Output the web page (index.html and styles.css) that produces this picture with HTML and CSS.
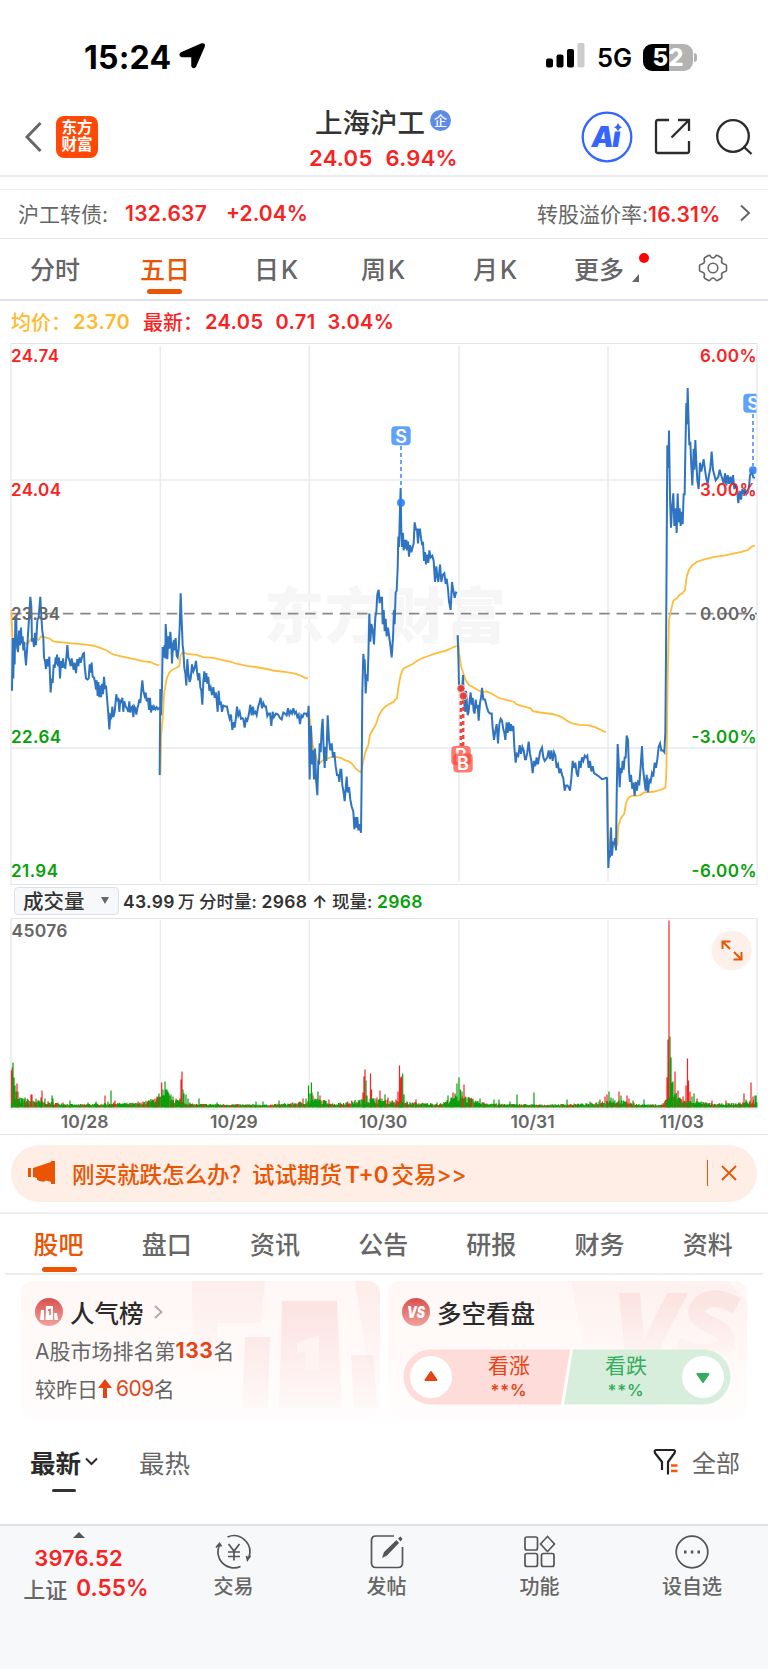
FILE: index.html
```html
<!DOCTYPE html>
<html lang="zh-CN">
<head>
<meta charset="utf-8">
<title>上海沪工</title>
<link rel="stylesheet" href="styles.css">
</head>
<body>
<div class="status">
  <span class="time">15:24</span>
  <svg class="loc" width="27" height="27" viewBox="0 0 27 27"><path d="M2.5 11.500 23 2.500Q25.500 2 24.500 4.500L16 24Q14.500 26 13.500 24V14H3Q.5 13 2.500 11.500Z" stroke="#000" stroke-width="2.500" stroke-linejoin="round"/></svg>
  <svg class="signal" width="39" height="26" viewBox="0 0 39 26"><rect x="0" y="15.500" width="7" height="9" rx="2"/><rect x="10.500" y="11.500" width="7" height="13" rx="2"/><rect x="21" y="6" width="7" height="18.500" rx="2"/><rect x="31.500" y="0" width="7" height="24.500" rx="2" fill="#ccc"/></svg>
  <span class="net">5G</span>
  <span class="battery">52</span><i class="nub"></i>
</div>
<header class="header">
  <svg class="back" width="18" height="32" viewBox="0 0 18 32"><path d="M15.500 2 2 16 15.500 30"/></svg>
  <div class="logo">东方<br>财富</div>
  <div class="title">
    <div class="name">上海沪工<span class="ent">企</span></div>
    <div class="price"><span>24.05</span><span>6.94%</span></div>
  </div>
  <svg class="ai" width="52" height="52" viewBox="0 0 52 52"><circle cx="26" cy="26" r="24.300"/><text x="10.500" y="35.500" textLength="29">Ai</text><rect x="32" y="11" width="11" height="9.500" fill="#fff"/><path d="M37 12Q38 15.200 41 16.200 38 17.200 37 20.200 36 17.200 33 16.200 36 15.200 37 12Z"/></svg>
  <svg class="share" width="37" height="37" viewBox="0 0 37 37"><path d="M15 2H4Q2 2 2 4V33Q2 35 4 35H33Q35 35 35 33V23M24 2H35V13M35 2 17.500 19.500"/></svg>
  <svg class="search" width="38" height="38" viewBox="0 0 38 38"><circle cx="18" cy="18" r="15.800"/><path d="M28.500 28.500 36.500 36"/></svg>
</header>
<div class="gap"></div>
<div class="bond">
  <span class="b1">沪工转债:</span><span class="b2">132.637</span><span class="b3">+2.04%</span>
  <span class="b4">转股溢价率:<b>16.31%</b></span>
  <svg width="12" height="18" viewBox="0 0 12 18"><path d="M2 1.500 10 9 2 16.500"/></svg>
</div>
<nav class="periods">
  <span>分时</span><span class="on">五日</span><span>日<em>K</em></span><span>周<em>K</em></span><span>月<em>K</em></span><span class="more">更多<i></i><u></u></span>
  <svg class="gear" width="30" height="28" viewBox="0 0 30 28"><path d="M10.500 1.500Q12 1 13 3Q15 5 17 3Q18 1 19.500 1.500L23 3.500Q24.500 4.500 23.500 7Q23.500 9.500 26 10Q28.500 10.500 28.500 12V16Q28.500 17.500 26 18Q23.500 18.500 23.500 21Q24.500 23.500 23 24.500L19.500 26.500Q18 27 17 25Q15 23 13 25Q12 27 10.500 26.500L7 24.500Q5.500 23.500 6.500 21Q6.500 18.500 4 18Q1.500 17.500 1.500 16V12Q1.500 10.500 4 10Q6.500 9.500 6.500 7Q5.500 4.500 7 3.500Z"/><circle cx="15" cy="14" r="4.800"/></svg>
</nav>
<div class="quote"><span class="avg">均价：</span><span class="avg n">23.70</span><span class="q3">最新：</span><span class="n">24.05</span><span class="n q5">0.71</span><span class="n q6">3.04%</span></div>

<svg class="chart" width="768" height="543" viewBox="0 343 768 543">
  <g class="frame"><path d="M11 343.500H757V884.500H11Z"/></g>
  <g class="grid"><path d="M160.300 346V881M309.300 346V881M459 346V881M608 346V881M11 480H757M11 748H757"/></g>
  <text class="mark" x="264" y="637.500" textLength="242">东方财富</text>
  <path class="dash" d="M11 613.600H757"/>
  <g class="avgline" transform="translate(0 340) scale(.33333 .35075)"><polyline points="34,770 37,840 40,880 44,885 50,868 58,862 70,862 78,866 84,865 92,853 104,853 115,855 124,845 136,848 148,851 160,859 175,861 195,863 215,865 240,867 265,869 285,873 305,879 322,886 332,893 345,898 360,901 385,906 410,911 430,916 450,918 462,923 470,926 478,927"/><polyline points="481,1240 484,1120 488,1080 492,1010 500,965 508,948 517,940 528,935 538,930 542,898 549,889 560,895 575,896 590,898 610,904 640,906 665,912 690,917 710,923 740,929 770,933 800,938 825,943 860,947 885,951 900,956 915,963 924,965"/></g>
  <g class="avgline" transform="translate(300 340) scale(.33333 .35075)"><polyline points="27,1060 32,1100 38,1155 46,1180 52,1200 58,1207 66,1200 74,1195 85,1192 100,1187 112,1189 125,1192 135,1198 148,1202 158,1210 165,1220 174,1227 183,1233 190,1200 196,1175 205,1155 210,1125 218,1112 228,1095 236,1072 246,1055 256,1045 268,1038 280,1032 291,1020 296,985 302,955 310,937 322,931 338,924 350,915 365,908 385,901 405,894 425,889 440,885 455,878 470,872"/><polyline points="473,842 477,890 483,930 490,950 496,968 506,983 520,990 532,997 545,1003 560,1002 575,1008 595,1020 615,1025 643,1032 648,1038 665,1043 692,1050 698,1058 720,1062 760,1067 785,1075 805,1088 820,1094 840,1097 865,1099 885,1104 900,1110 910,1116 918,1117"/></g>
  <g class="avgline" transform="translate(520 340) scale(.33333 .35075)"><polyline points="262,1247 264,1380 268,1445 280,1445 292,1440 295,1385 302,1365 313,1350 318,1320 325,1305 335,1300 360,1298 372,1290 400,1288 420,1283 436,1277 439,1240 441,1120 443,960 447,800 452,775 460,743 470,737 478,727 487,722 495,713 500,675 507,655 517,642 530,633 550,626 580,619 610,615 640,609 665,604 685,598 695,589 705,586"/></g>
  <g class="priceline" transform="translate(0 340) scale(.33333 .35075)"><polyline points="36,1000 38,850 40,965 42,850 44,925 46,795 49,790 50,860 52,880 54,890 57,828 60,870 63,820 65,865 68,845 70,885 72,860 75,895 78,928 82,870 86,810 91,732 94,760 96,860 99,850 102,875 105,835 108,870 112,800 116,790 121,732 124,790 127,830 130,850 132,905 135,915 138,938 141,910 145,930 148,903 150,960 152,1005 155,965 158,978 161,925 164,935 167,905 169,925 171,897 174,930 177,905 180,965 183,915 186,935 189,908 192,932 196,935 199,905 202,870 205,905 208,912 212,930 215,908 218,925 221,940 224,920 228,950 232,910 235,930 239,905 242,920 245,908 249,895 252,893 254,930 258,965 262,968 266,965 269,925 272,948 275,920 278,960 282,962 285,975 288,997 290,970 293,1015 295,975 298,1018 300,985 303,1018 306,980 309,1010 312,960 315,995 318,985 321,1020 324,1055 328,1110 331,1070 334,1075 337,1045 340,1075 344,1060 349,1010 352,1030 355,1020 358,1060 361,1025 364,1035 367,1020 370,1060 373,1030 377,1045 381,1050 385,1060 388,1030 391,1062 394,1048 397,1045 400,1075 403,1045 406,1050 409,1068 412,1050 415,1040 418,1025 421,1035 424,1000 427,970 430,1000 434,1015 437,1005 440,1030 444,1020 447,1055 450,1020 453,1062 456,1042 459,1055 462,1045 466,1053 470,1047 474,1053 480,1048"/><polyline points="479,1240 481,995 483,1070 486,990 488,875 491,905 494,870 496,908 497,810 500,860 502,910 505,845 508,880 511,832 514,870 516,922 519,870 522,855 524,885 527,850 530,900 533,905 536,880 539,820 542,722 545,800 548,870 550,885 553,935 556,950 559,985 562,910 565,950 569,975 572,965 576,925 580,945 584,935 588,915 591,945 595,970 598,950 601,990 604,1000 607,1040 610,975 613,945 616,975 619,950 622,980 625,960 628,1000 632,990 636,1012 640,990 644,1020 648,1005 653,1060 656,1000 659,1040 662,1030 666,1060 670,1042 676,1045 681,1045 685,1065 689,1080 693,1068 697,1112 700,1090 704,1105 708,1075 711,1045 715,1070 719,1060 723,1080 727,1078 730,1080 734,1105 738,1080 742,1085 746,1070 751,1040 755,1070 759,1045 762,1065 766,1060 770,1070 774,1048 778,1035 782,1020 786,1050 790,1035 794,1045 798,1045 802,1072 806,1065 810,1065 814,1100 818,1060 822,1075 828,1065 834,1068 840,1078 845,1082 850,1062 855,1065 860,1070 864,1050 868,1068 872,1058 876,1065 880,1050 884,1065 888,1060 892,1075 896,1068 900,1095 904,1070 908,1075 912,1065 918,1065 923,1075"/></g>
  <g class="priceline" transform="translate(300 340) scale(.33333 .35075)"><polyline points="23,1075 26,1043 29,1253 31,1150 33,1100 36,1210 39,1170 42,1253 45,1165 48,1252 52,1298 55,1200 57,1210 59,1150 62,1175 65,1110 68,1080 71,1170 74,1220 76,1160 79,1200 83,1070 87,1140 91,1170 95,1150 99,1190 103,1175 107,1215 111,1240 115,1240 118,1260 121,1225 124,1225 127,1270 130,1285 134,1315 137,1280 140,1245 143,1290 147,1275 151,1310 155,1330 160,1345 163,1395 166,1360 169,1390 172,1360 175,1398 178,1380 183,1405 185,1250 187,1000 190,895 192,920 194,910 197,1008 200,960 203,965 205,905 208,780 211,860 214,810 218,825 222,868 226,790 229,775 232,725 236,712 239,750 242,735 246,735 248,810 251,770 254,830 257,795 260,845 264,820 268,850 271,870 275,905 279,850 282,770 284,810 287,720 290,715 293,650 295,560 297,590 300,480 302,422 304,550 306,590 309,550 311,600 314,570 316,595 319,570 321,600 324,575 327,618 330,585 334,605 338,590 341,580 344,520 348,540 351,540 354,580 357,540 360,540 363,565 367,585 369,575 372,630 375,605 378,640 381,612 385,635 388,600 392,620 397,615 401,630 405,690 409,645 412,675 415,690 420,640 424,690 428,670 433,665 437,695 440,680 444,710 447,745 452,770 456,690 460,715 464,735 468,720 471,722"/><polyline points="473,842 475,900 477,985 480,985 483,1000 487,985 489,955 491,1010 494,1050 496,1060 498,1000 500,1025 503,1070 506,1060 509,1025 512,1005 515,1040 518,1020 521,1058 524,1065 527,1025 530,1050 533,1040 536,1085 540,1035 544,1015 546,992 550,1025 555,1025 560,1045 565,1060 570,1065 575,1065 578,1105 582,1140 586,1115 590,1095 594,1150 598,1095 602,1080 606,1085 610,1110 613,1120 616,1140 620,1090 623,1120 627,1090 630,1115 633,1095 637,1115 640,1100 643,1160 647,1205 651,1180 655,1185 659,1155 663,1180 667,1160 671,1170 675,1195 678,1195 682,1175 686,1145 690,1180 694,1200 698,1235 702,1200 706,1215 710,1190 714,1210 720,1175 726,1162 730,1190 734,1200 738,1195 742,1190 746,1170 750,1195 754,1170 758,1200 762,1175 766,1185 770,1220 774,1210 778,1235 782,1222 786,1240 790,1250 794,1285 798,1270 802,1270 806,1275 810,1285 814,1250 818,1200 822,1220 826,1205 830,1235 834,1245 838,1200 842,1220 846,1190 850,1200 854,1185 858,1190 862,1185 866,1220 870,1200 874,1230 878,1215 882,1235 890,1240 898,1245 906,1252 914,1250 921,1247"/></g>
  <g class="priceline" transform="translate(520 340) scale(.33333 .35075)"><polyline points="261,1247 263,1400 265,1505 268,1455 270,1475 273,1390 276,1470 279,1430 282,1440 285,1420 288,1455 290,1300 293,1152 296,1200 299,1275 302,1220 305,1235 308,1200 311,1225 314,1190 317,1190 320,1128 324,1140 327,1230 330,1260 333,1240 337,1280 340,1262 344,1300 347,1260 351,1285 354,1260 358,1265 362,1215 366,1158 369,1220 373,1255 377,1285 380,1240 384,1290 388,1255 392,1260 396,1235 400,1245 404,1205 408,1220 412,1195 416,1160 420,1150 424,1170 429,1170 433,1175 436,1120 438,900 440,600 442,300 445,365 447,258 450,450 453,535 456,480 460,437 463,530 467,480 470,550 473,438 476,520 479,480 482,530 485,490 488,525 491,440 494,440 496,320 499,180 501,240 503,137 506,240 508,300 511,290 514,360 517,415 521,310 523,370 526,285 529,350 532,400 536,425 540,350 544,375 548,355 551,340 555,370 559,395 563,410 567,385 571,365 575,318 579,370 583,385 587,400 591,395 595,390 599,370 603,385 607,395 611,410 615,380 619,415 623,385 627,410 631,390 635,412 639,385 643,425 647,410 651,425 655,465 659,430 663,455 667,425 671,440 675,425 679,440 683,435 687,420 690,385 695,375 700,392 705,393"/></g>
  <g class="labels">
    <text x="11" y="361.500" textLength="48">24.74</text><text x="11" y="495.500" textLength="50">24.04</text>
    <text class="mid" x="11" y="619.500" textLength="49">23.34</text>
    <text class="dn" x="11" y="742.500" textLength="50">22.64</text><text class="dn" x="11" y="877" textLength="47">21.94</text>
    <text x="700" y="361.500" textLength="56.500">6.00%</text><text x="700" y="495.500" textLength="56.500">3.00%</text>
    <text class="mid" x="700" y="619.500" textLength="56.500">0.00%</text>
    <text class="dn" x="691.500" y="742.500" textLength="65">-3.00%</text><text class="dn" x="691.500" y="877" textLength="65">-6.00%</text>
  </g>
  <g class="sell"><path d="M401 446V487M753 414V466"/><circle cx="401" cy="502.800" r="4"/><rect x="391.300" y="426.300" width="19.400" height="19" rx="4"/><text x="401" y="442.500">S</text></g>
  <svg x="740" y="343" width="16.500" height="160" viewBox="740 343 16.500 160"><g class="sell"><circle cx="753" cy="470.300" r="4"/><rect x="743.300" y="393.700" width="19.400" height="19" rx="4"/><text x="753" y="410">S</text></g></svg>
  <g class="buy"><path d="M460.800 694V746M463.200 700V752"/><circle cx="461" cy="688.500" r="4"/><circle cx="463.300" cy="696" r="4"/><rect x="451.300" y="746" width="19.400" height="19" rx="4"/><text x="461" y="762">B</text><rect x="453.300" y="753.500" width="19.400" height="19" rx="4"/><text x="463" y="769.500">B</text></g>
</svg>

<div class="volbar"><span class="select">成交量<i></i></span><span class="vt"><b>43.99</b><em>万</em></span><span class="vt v2">分时量: <b>2968 ↑</b></span><span class="vt v3">现量: <b class="green">2968</b></span></div>
<svg class="volume" width="768" height="192" viewBox="0 918 768 192">
  <g class="frame"><path d="M11 918.500H757V1109H11Z"/></g>
  <g class="grid"><path d="M160.300 920V1107M309.300 920V1107M459 920V1107M608 920V1107"/></g>
  <path id="up" stroke="#f82020"/><path id="down" stroke="#08a00a"/>
  <text class="vmax" x="11.500" y="937" textLength="56">45076</text>
  <circle cx="731.700" cy="950.500" r="20" fill="#fdf0ea"/>
  <path class="expand" d="M722.500 949V941.500H730.500M722.500 941.500 730 949M741.500 952V959.500H733.500M741.500 959.500 734 952"/>
</svg>
<div class="dates"><span>10/28</span><span>10/29</span><span>10/30</span><span>10/31</span><span>11/03</span></div>

<div class="promo">
  <svg class="horn" width="28" height="24" viewBox="0 0 28 24"><path d="M0 7H3V16H0ZM5 7 23 1V0H27V23H23V21L18 19.500Q16 22 9 19V17L5 16Z"/></svg>
  <span class="ptext">刚买就跌怎么办？<span class="try">试试期货<em>T+0</em>交易&gt;&gt;</span></span>
  <i class="bar"></i>
  <svg width="16" height="16" viewBox="0 0 16 16"><path class="x" d="M1 1 15 15M15 1 1 15"/></svg>
</div>
<nav class="sections"><span class="on">股吧</span><span>盘口</span><span>资讯</span><span>公告</span><span>研报</span><span>财务</span><span>资料</span></nav>
<div class="cards">
  <section class="card">
    <svg class="art" width="359" height="140" viewBox="0 0 359 140">
      <defs><linearGradient id="ga" x2="0" y2="1"><stop stop-color="#f9dcda"/><stop offset="1" stop-color="#f9dcda" stop-opacity=".15"/></linearGradient></defs>
      <path d="M171 0H244L240 42H196V90H172Z" fill="url(#ga)" opacity=".35"/><path d="M334 0H359V100L345 74Z" fill="url(#ga)" opacity=".4"/>
      <path d="M224 56H249L247 127H221ZM261 20H316L321 127H258ZM330 74H352L357 127H333Z" fill="url(#ga)" opacity=".75"/>
      <path d="M276 62 298 54V89H284V70L276 73Z" fill="#fef3f1"/>
    </svg>
    <h3><svg width="28" height="28" viewBox="0 0 28 28"><defs><linearGradient id="gb" x2="0" y2="1"><stop stop-color="#d9504e"/><stop offset="1" stop-color="#f3a19b"/></linearGradient></defs><circle cx="14" cy="14" r="14" fill="url(#gb)"/><path d="M6 12H9V22H5ZM11 8H18V22H10.500ZM19 15H22L23 22H19.500Z" fill="#fff"/><path d="M13 12.500 15 11.500V17" fill="none" stroke="#df6964" stroke-width="1.500"/></svg>人气榜<svg class="go" width="9" height="14" viewBox="0 0 9 14"><path d="M1 1 7.500 7 1 13"/></svg></h3>
    <p>A股市场排名第<b>133</b>名</p>
    <p class="p2">较昨日<svg width="14" height="19" viewBox="0 0 14 19"><path d="M7 0 14 9H9V19H5V9H0Z" fill="#e64414"/></svg><em>609</em>名</p>
  </section>
  <section class="card">
    <svg class="art" width="359" height="140" viewBox="0 0 359 140">
      <path d="M183 0H340L359 20V90H200Z" fill="url(#ga)" opacity=".22"/>
      <path d="M231 12H252L256 58 279 12H300L268 75H237Z" fill="url(#ga)" opacity=".7"/><path d="M349 25Q320 9 309 28C305 45 342 43 338 62Q326 79 289 65" fill="none" stroke="url(#ga)" stroke-width="17" opacity=".65"/>
    </svg>
    <h3><svg width="28" height="28" viewBox="0 0 28 28"><circle cx="14" cy="14" r="14" fill="url(#gb)"/><text class="vs" x="5" y="20" textLength="18" lengthAdjust="spacingAndGlyphs">VS</text></svg>多空看盘</h3>
    <div class="vote">
      <svg width="328" height="56" viewBox="0 0 328 56"><path d="M28 .5H167L158 55.500H28A27.500 27.500 0 0 1 28 .5Z" fill="#fddcd9"/><path d="M170 .5H300A27.500 27.500 0 0 1 300 55.500H161Z" fill="#d7eedd"/><circle cx="28" cy="28" r="21" fill="#fff"/><circle cx="300" cy="28" r="21" fill="#fff"/><path d="M28 23 33.500 31H22.500Z" fill="#e64414" stroke="#e64414" stroke-width="2" stroke-linejoin="round"/><path d="M300 33 305.500 25H294.500Z" fill="#36ad5c" stroke="#36ad5c" stroke-width="2" stroke-linejoin="round"/></svg>
      <span class="bull">看涨<b>**%</b></span><span class="bear">看跌<b>**%</b></span>
    </div>
  </section>
</div>
<div class="sort">
  <span class="newest">最新<svg width="13" height="9" viewBox="0 0 13 9"><path d="M1 1.500 6.500 7 12 1.500"/></svg></span><span class="hot">最热</span>
  <svg class="filter" width="26" height="28" viewBox="0 0 26 28"><path d="M9 22V14L2 5Q1 2 3 2H20Q23 2 21.500 5L15 14V26.500" fill="none" stroke="#222" stroke-width="2.200" stroke-linejoin="round"/><path d="M18 17.500H24.500M18 23H24.500" stroke="#f50" stroke-width="2.600"/></svg>
  <span class="all">全部</span>
</div>
<footer class="tabbar">
  <div class="index"><i></i><b>3976.52</b><span>上证<b>0.55%</b></span></div>
  <div class="item"><svg width="38" height="36" viewBox="0 0 38 36"><path d="M12.500 3A16 16 0 0 1 34.500 21Q34 24 32.500 26M35.500 21.500 32.500 26 31.500 22M25.500 32.500A16 16 0 0 1 4.500 11M1 13.500 4.500 9.500 6.500 12.500M13.500 10 19 17 24.500 10M19 17V26.500M13 18H25M13 22.500H25"/></svg>交易</div>
  <div class="item"><svg width="36" height="36" viewBox="0 0 36 36"><path d="M25 2H7Q2.500 2 2.500 6.500V29Q2.500 33.500 7 33.500H29Q33.500 33.500 33.500 29V13"/><path class="pen" d="M13 24 15 18 27.500 6 30 9 18 21.500ZM29 4.500 31.500 2.500 33.500 5 31.500 7.500Z"/></svg>发帖</div>
  <div class="item"><svg width="34" height="34" viewBox="0 0 34 34"><rect x="2" y="2" width="12.500" height="13" rx="2"/><path d="M24.500 1.500Q26 3 31.500 9 26 15 24.500 16.500 23 15 17.500 9 23 3 24.500 1.500Z"/><rect x="2" y="18.500" width="12.500" height="13" rx="2"/><rect x="18.500" y="18.500" width="12.500" height="13" rx="2"/></svg>功能</div>
  <div class="item"><svg width="36" height="36" viewBox="0 0 36 36"><circle cx="18" cy="18" r="15.800"/><path class="dots" d="M10 18H12.500M16.800 18H19.300M23.500 18H26"/></svg>设自选</div>
</footer>
<script src="chart.js"></script>
</body>
</html>
```
FILE: chart.js
```js
// Per-minute volume bars: listed peaks over a quiet baseline.
const peaks = '11.5:37r 12.3:40r 13:45g 14:30g 15:22g 16:16r 17:24r 18:16g 20:10g 22:9g 25:10g 28:8r 31:13r 32:13r 36:9g 41:10r 42:17r 45:9g 52:12g 53:9g 63:5r 70:7g 88:5g 96:6g 105:12r 108:6g 111:17g 115:7r 138:6r 143:6r 153:8g 155:9r 157:11r 159:14g 161.7:25r 163:18g 165:26g 166:18g 167:18g 168:16g 169:14g 171:13g 173:11g 176:9r 180:9r 181:28r 182:36r 183:18g 184:14g 186:13g 188:9g 190:5g 199:9g 217:5g 256:6g 263:6g 279:7g 300:6r 303:9r 306:9g 308.5:22g 310:14g 311.4:25g 312:15g 313:12r 315:9g 318:16g 320:12r 325:7g 329:8r 340:5g 355:7g 363:15r 364:31r 365:38r 366:27g 367:12g 370.5:34r 371.5:18r 375:9g 377:10r 380:17r 382:9g 385:13g 388:10r 392:7g 396:8r 398:16r 399.5:42r 400.5:30r 401.5:31r 402.7:34g 404:13g 407:6g 416:8r 437:5g 448:12g 451:10g 453:15r 455:14g 457:24g 459:30g 460.5:18g 462:16g 464:23r 466:10g 469:9r 473:7g 480:9g 484:5r 494:8g 499:8g 510:6g 517:13g 534:15g 567:8g 590:6g 600:8r 605:11r 607:13r 609:16g 611:10g 613:9g 619:16r 621:12g 627:12r 629:9r 633:7g 644:8g 667:30r 668:68r 669:187r 670:71g 671:50g 672:25g 673:26g 675:36r 676:12g 678:17r 680:10g 683:11r 686:22r 687.5:49r 688.5:27r 690:16r 692:11g 694:14g 697:9r 700:5g 712:7r 726:7r 740:5r 744:14r 746:8g 751:25r 753:11r 755:12g 756:12g'.split(' ');
let seed = 7;
const rnd = () => (seed = (seed * 16807) % 2147483647) / 2147483647;
const paths = { r: '', g: '' };
const base = 1107.5;
const swell = [[11, 11], [45, 6], [75, 2], [110, 4], [140, 4], [165, 14], [190, 3], [270, 2], [300, 5], [318, 9], [335, 3], [370, 10], [405, 5], [440, 3], [460, 15], [480, 5], [500, 3], [545, 2], [590, 3.500], [612, 9], [640, 2.500], [662, 2], [672, 20], [684, 7], [696, 6], [715, 3], [740, 4], [757, 9]];
const level = x => {
  for (let i = 1; i < swell.length; i++) {
    const [a, p] = swell[i - 1], [b, q] = swell[i];
    if (x <= b) return p + (q - p) * (x - a) / (b - a);
  }
  return 3;
};
for (let x = 11.500; x < 757; x += 0.83) {
  const h = 1.3 + level(x) * (0.3 + rnd() * 0.6);
  paths[rnd() < 0.36 ? 'r' : 'g'] += `M${x.toFixed(1)} ${base}v${-h.toFixed(1)}`;
}
for (const p of peaks) {
  const [x, v] = p.split(':');
  paths[v.slice(-1)] += `M${x} ${base}v-${parseFloat(v)}`;
}
document.getElementById('up').setAttribute('d', paths.r);
document.getElementById('down').setAttribute('d', paths.g);
```
FILE: styles.css
```css
* { box-sizing: border-box; }
body { margin: 0; width: 768px; height: 1669px; overflow: hidden; background: #fff; color: #666; font-family: Inter, "Noto Sans CJK SC", sans-serif; }
i, em, u { font-style: normal; text-decoration: none; }
svg { display: block; flex: none; }
span { white-space: nowrap; }
.status { display: flex; align-items: center; height: 78px; padding: 36px 0 0 84px; color: #000; }
.time { width: 95px; font-size: 32px; font-weight: 700; letter-spacing: .2px; }
.loc { margin-top: -3px; }
.signal { margin: -2px 0 0 340px; }
.net { margin-left: 12px; width: 46px; font-size: 25.500px; font-weight: 600; letter-spacing: 0; }
.battery { width: 50px; height: 27px; border-radius: 9px; background: linear-gradient(90deg, #000 52%, #b3b3b3 52%); color: #fff; font-size: 24px; font-weight: 800; line-height: 27px; text-align: center; }
.nub { width: 3px; height: 9px; margin-left: 1px; border-radius: 0 3px 3px 0; background: #b3b3b3; }
.header { display: flex; height: 99px; padding: 20px 0 0 25px; align-items: center; border-bottom: 2px solid #ededef; }
.back, .share, .search, .bond svg, .gear, .go, .newest svg, .item svg { fill: none; stroke: #666; stroke-width: 3; }
.logo { width: 42px; height: 42px; margin-left: 13px; border-radius: 8px; background: #ff4a07; color: #fff; font-size: 15.500px; font-weight: 700; line-height: 17.500px; text-align: center; padding-top: 3px; }
.title { width: 150px; margin: 6px 0 0 211px; }
.name { display: flex; align-items: center; height: 35px; margin-left: 6px; color: #333; font-size: 27.500px; font-weight: 500; }
.ent { width: 21px; height: 21px; margin-left: 5px; border-radius: 50%; background: #5d8ce8; color: #fff; font-size: 13px; line-height: 20px; text-align: center; }
.price { display: flex; gap: 13px; margin-top: 2px; color: #f82222; font-size: 22px; font-weight: 600; line-height: 36px; letter-spacing: .3px; }
.ai { margin-left: 122px; stroke: #36f; stroke-width: 2.300; fill: none; }
.ai text { font: italic 900 28px Inter; fill: #36f; stroke: none; }
.ai rect { stroke: none; }
.ai path { fill: #36f; stroke: none; }
.share { margin-left: 21px; stroke: #2b2b2b; stroke-width: 2.300; }
.search { margin-left: 24px; stroke: #2b2b2b; stroke-width: 2.300; }
.gap { height: 13px; border-bottom: 1px solid #eaeaec; }
.bond { display: flex; align-items: center; height: 49px; padding: 0 0 2px 18px; border-bottom: 1px solid #e6e8ec; font-size: 21px; }
.b1 { width: 107px; }
.b2 { width: 101px; color: #f82222; font-weight: 600; letter-spacing: .25px; font-size: 21px; }
.b3 { color: #f82222; font-weight: 600; width: 311px; font-size: 21px; }
.b4 { width: 202px; }
.b4 b { color: #f82222; font-weight: 600; font-size: 21px; letter-spacing: .2px; }
.bond svg { stroke-width: 2; }
.periods { display: grid; grid-template-columns: 110px 114px 107px 112px 101px 124px 32px; align-items: center; height: 62px; padding: 0 0 3px 30px; border-bottom: 2px solid #dfe2e8; font-size: 25px; font-weight: 500; }
.periods span { position: relative; }
.periods em { margin-left: 2px; font-size: 25px; }
.periods .on { color: #ea5504; }
.periods .on::after { content: ""; position: absolute; left: 7px; bottom: -8px; width: 35px; height: 5px; border-radius: 3px; background: #ea5504; }
.more i { position: absolute; left: 65px; top: 3px; width: 10px; height: 10px; border-radius: 50%; background: red; }
.more u { position: absolute; left: 58px; bottom: 4px; border-left: 7px solid transparent; border-bottom: 8px solid #666; }
.gear { stroke-width: 1.600; }
.quote { display: flex; align-items: center; height: 42px; padding: 0 0 1px 11px; color: #f82222; font-size: 20px; font-weight: 500; }
.quote .n { letter-spacing: .4px; font-weight: 600; }
.quote .avg { color: #ffb92e; width: 62px; }
.quote .avg.n { width: 70px; }
.q3 { width: 62px; }
.q5 { margin-left: 12px; }
.q6 { margin-left: 12px; }
.frame path { fill: none; stroke: #e2e4e8; stroke-width: 1.200; }
.grid path { fill: none; stroke: #e8eaf0; stroke-width: 1.500; }
.mark { font: 900 60px "Noto Sans CJK SC"; fill: #f6f6f6; }
.dash { stroke: #888; stroke-width: 1.700; stroke-dasharray: 10.500 6.800; }
.avgline polyline { fill: none; stroke: #ffbc3a; stroke-width: 1.800; vector-effect: non-scaling-stroke; }
.priceline polyline { fill: none; stroke: #2f74c0; stroke-width: 2; vector-effect: non-scaling-stroke; }
.labels text { font: 600 17px Inter; fill: #f82222; }
.labels .mid { fill: #666; }
.labels .dn { fill: #08a00a; }
.sell path, .buy path { stroke-width: 2; stroke-dasharray: 4 3; stroke: #68a5fa; }
.sell rect { fill: #60a2fb; }
.sell circle { fill: #2b80f2; fill-opacity: .9; }
.sell text, .buy text { font: 600 18px Inter; fill: #fff; text-anchor: middle; }
.buy path { stroke: #f0483c; stroke-width: 2.500; }
.buy rect { fill: #ff4535; fill-opacity: .72; }
.buy circle { fill: #ef3b30; fill-opacity: .9; stroke: #fff; stroke-width: .6; }
.volbar { display: flex; align-items: center; height: 32px; padding: 0 0 4px 14px; color: #333; }
.select { display: flex; align-items: center; justify-content: space-between; width: 105px; height: 28px; margin: 1px 4px 0 0; padding: 0 9px 1px 8px; border: 1px solid #dde0e6; border-radius: 4px; background: #f7f8fa; font-size: 20.500px; font-weight: 500; }
.select i { border: 4px solid transparent; border-top: 7px solid #666; border-bottom: 0; }
.vt { width: 76px; font-size: 17.500px; font-weight: 500; }
.vt em { margin-left: 3px; font-size: 17px; }
.vt b { font-weight: 600; letter-spacing: .3px; }
.v2 { width: 133px; }
.vt .green { color: #08a00a; }
.volume path { fill: none; stroke-width: 1.200; }
.volume .expand { stroke: #ea5504; stroke-width: 2; }
.vmax { font: 600 17.500px Inter; fill: #666; }
.dates { display: grid; grid-template-columns: repeat(5, 149.300px); height: 25px; padding-left: 10px; border-bottom: 1px solid #e3e5e9; font-size: 17.500px; font-weight: 600; line-height: 24px; text-align: center; }
.promo { display: flex; align-items: center; height: 57px; margin: 10px 11px 0; padding: 0 0 1px 17px; border-radius: 29px; background: #feeee6; color: #ea5504; }
.horn { fill: #ea5504; }
.ptext { display: flex; margin-left: 16px; width: 634.500px; font-size: 22.500px; font-weight: 500; }
.try em { margin: 0 3px; font-weight: 600; }
.bar { width: 1.500px; height: 26px; margin-right: 13px; background: #ea5504; }
.x { stroke: #ea5504; stroke-width: 1.800; }
.sections { position: relative; display: grid; grid-template-columns: repeat(7, 108.200px); height: 63px; margin-top: 10px; padding-left: 4.500px; border-top: 2px solid #eff0f2; font-size: 25px; font-weight: 500; line-height: 63px; }
.sections::after { content: ""; position: absolute; left: 5px; right: 5px; bottom: 0; height: 2px; background: #eee; }
.sections span { position: relative; text-align: center; }
.sections .on { color: #ea5504; }
.sections .on::after { content: ""; position: absolute; left: 37.500px; bottom: 5px; width: 35px; height: 5px; border-radius: 3px; background: #ea5504; }
.cards { display: grid; grid-template-columns: 359px 359px; gap: 8px; padding: 6px 0 0 21px; }
.card { position: relative; height: 140px; padding: 17px 14px 0; border-radius: 12px; overflow: hidden; background: linear-gradient(#fff7f5, #fffdfd); font-size: 21px; }
.art { position: absolute; left: 0; top: 0; }
.card h3 { position: relative; display: flex; align-items: center; gap: 7px; height: 28px; margin: 0; color: #2b2b2b; font-size: 24.500px; font-weight: 500; }
.go { margin-left: 3px; stroke: #aaa; stroke-width: 1.800; }
.vs { font: italic 900 16px Inter; fill: #fff; }
.card p { position: relative; display: flex; align-items: center; height: 30px; margin: 9px 0 0; }
.card p b, .card p em { color: #e64414; font-weight: 700; letter-spacing: .6px; }
.card p em { font-weight: 400; letter-spacing: -.5px; margin-left: 4px; }
.card .p2 { margin-top: 8px; }
.vote { position: relative; display: grid; margin: 23px 0 0 1px; height: 56px; width: 328px; }
.vote span { position: absolute; top: 3px; width: 60px; color: #e64414; text-align: center; line-height: 27px; }
.vote b { display: block; font-size: 16.500px; font-weight: 600; line-height: 22px; letter-spacing: .8px; }
.vote .bull { left: 76px; }
.vote .bear { left: 193px; color: #36ad5c; }
.sort { display: flex; align-items: center; height: 103px; padding: 0 0 22px 30px; font-size: 25.500px; }
.newest { position: relative; display: flex; align-items: center; gap: 4px; width: 109px; color: #2b2b2b; font-weight: 700; }
.newest::after { content: ""; position: absolute; left: 22px; bottom: -12px; width: 24px; height: 3.500px; border-radius: 2px; background: #333; }
.newest svg { stroke: #2b2b2b; stroke-width: 2; }
.hot { width: 514px; }
.all { margin-left: 13px; font-size: 24px; }
.tabbar { display: grid; grid-template-columns: 157px 153px 153px 153px 152px; height: 145px; border-top: 2px solid #dde1e8; background: #f7f8fa; font-size: 20px; font-weight: 500; }
.index { display: flex; flex-direction: column; align-items: center; padding-top: 6px; }
.index i { border: 6px solid transparent; border-bottom: 6px solid #555; border-top: 0; }
.index b { color: #f82222; font-weight: 600; font-size: 22px; letter-spacing: .1px; line-height: 30px; margin-top: 5px; }
.index span { display: flex; align-items: center; height: 30px; margin: 0 -15px 0 0; font-size: 22px; }
.index span b { margin: 0 0 0 9px; font-size: 22.500px; }
.item { display: flex; flex-direction: column; align-items: center; padding-top: 8px; line-height: 28px; }
.item svg { height: 36px; stroke: #555; stroke-width: 1.700; margin-bottom: 3px; }
.item .pen { fill: #555; stroke: none; }
.item .dots { stroke-width: 2.800; }
```
